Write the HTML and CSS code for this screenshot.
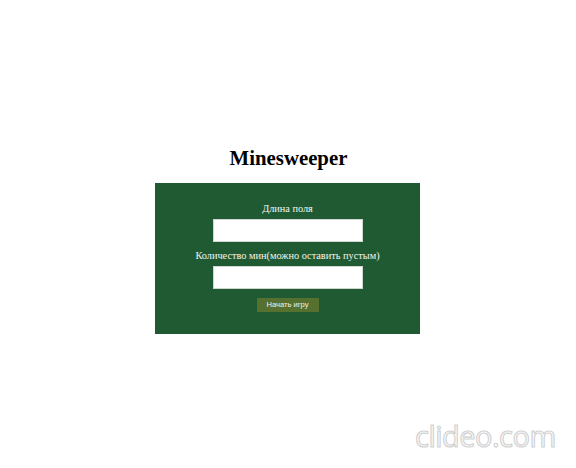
FILE: index.html
```html
<!DOCTYPE html>
<html lang="ru">
<head>
<meta charset="utf-8">
<title>Minesweeper</title>
<link rel="stylesheet" href="styles.css">
</head>
<body>
<main class="page">
  <h1 class="title">Minesweeper</h1>
  <form class="panel">
    <label class="label" for="size">Длина поля</label>
    <input class="field" id="size" type="text">
    <label class="label label-second" for="mines">Количество мин(можно оставить пустым)</label>
    <input class="field" id="mines" type="text">
    <button class="start" type="button">Начать игру</button>
  </form>
</main>
<div class="watermark">clideo.com</div>
</body>
</html>
```

FILE: styles.css
```css
html, body {
  margin: 0;
  padding: 0;
  background: #ffffff;
}
body {
  width: 576px;
  height: 468px;
  position: relative;
  overflow: hidden;
  font-family: "Liberation Serif", "Times New Roman", serif;
}
.page {
  display: flex;
  flex-direction: column;
  align-items: center;
  padding-top: 146px;
}
.title {
  margin: 0 0 13px 0;
  font-size: 20.8px;
  line-height: 24px;
  font-weight: bold;
  color: #000;
  padding-left: 1px;
}
.panel {
  width: 265px;
  margin-left: -1px;
  box-sizing: border-box;
  background: #205a32;
  display: flex;
  flex-direction: column;
  align-items: center;
  padding: 19px 0 22px 0;
}
.label {
  color: #f4f4ec;
  font-size: 10.3px;
  line-height: 14px;
  margin-bottom: 3px;
}
.label-second {
  margin-top: 7px;
}
.field {
  width: 150px;
  height: 23px;
  box-sizing: border-box;
  margin: 0;
  border: 1px solid #cfd8d0;
  background: #fff;
  padding: 0;
}
.start {
  margin-top: 9px;
  width: 62px;
  height: 14px;
  padding: 0;
  border: none;
  background: #56702f;
  color: #f2f2e6;
  font-family: "Liberation Sans", Arial, sans-serif;
  font-size: 7.6px;
  line-height: 14px;
}
.watermark {
  position: absolute;
  left: 415px;
  top: 418px;
  font-family: "Open Sans", "DejaVu Sans", sans-serif;
  font-size: 29px;
  line-height: 36px;
  color: #ffffff;
  -webkit-text-stroke: 1.2px #d2d2d2;
  letter-spacing: -0.5px;
}
```
